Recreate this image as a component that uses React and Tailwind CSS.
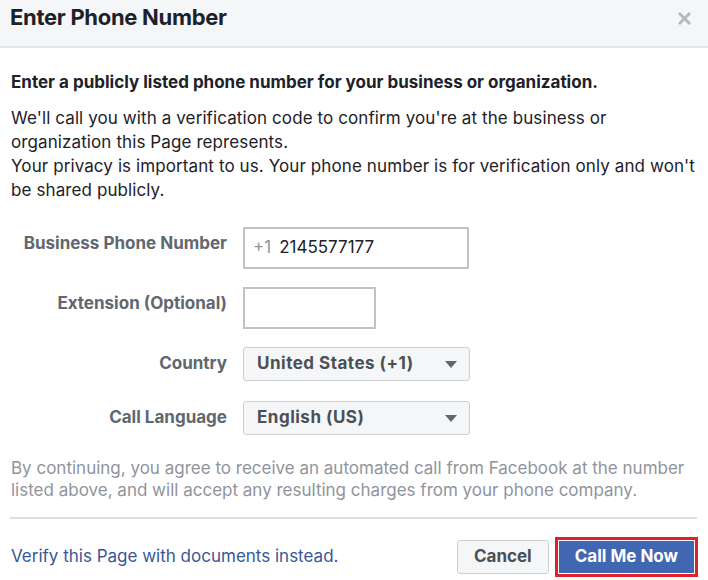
const FONT = { fontFamily: 'Inter, "Liberation Sans", Arial, sans-serif' }

function Caret() {
  return (
    <svg width="12" height="7" viewBox="0 0 12 7" className="shrink-0">
      <path d="M0 0 L12 0 L6 7 Z" fill="#606770" />
    </svg>
  )
}

function Row({ label, children, top = 'pt-[4px]' }) {
  return (
    <div className="flex items-start">
      <div className={`w-[232px] text-right pr-[16px] text-[17px] font-bold text-[#606770] ${top}`}>{label}</div>
      {children}
    </div>
  )
}

export default function App() {
  return (
    <div className="w-[708px] h-[580px] bg-white overflow-hidden text-[#1d2129]" style={FONT}>
      <header className="h-[48px] bg-[#f5f6f7] border-b-2 border-[#e5e5e5] flex items-center justify-between pl-[10px] pr-[16px]">
        <h1 className="text-[22px] font-bold tracking-[-0.3px] text-[#1d2129] -mt-[12px]">Enter Phone Number</h1>
        <svg width="15" height="15" viewBox="0 0 15 15" className="-mt-[10px]">
          <path d="M2 2 L13 13 M13 2 L2 13" stroke="#b4b7bc" strokeWidth="2.8" strokeLinecap="butt" />
        </svg>
      </header>

      <div className="px-[11px]">
        <p className="mt-[24px] text-[17px] font-bold leading-[20px]">
          Enter a publicly listed phone number for your business or organization.
        </p>
        <p className="mt-[14px] text-[17px] leading-[24px] tracking-[0.1px]">
          We'll call you with a verification code to confirm you're at the business or organization this Page represents.
          <br />
          Your privacy is important to us. Your phone number is for verification only and won't be shared publicly.
        </p>

        <div className="mt-[25px] flex flex-col gap-[18px]">
          <Row label="Business Phone Number">
            <div className="w-[226px] h-[42px] border-2 border-[#bec3c9] flex items-center pl-[8px] text-[17px]">
              <span className="text-[#90949c] mr-[8px]">+1</span>
              <span className="text-[#1d2129]">2145577177</span>
            </div>
          </Row>
          <Row label="Extension (Optional)">
            <div className="w-[133px] h-[42px] border-2 border-[#bec3c9]" />
          </Row>
          <div className="flex flex-col gap-[20px]">
            <Row label="Country">
              <div className="w-[227px] h-[34px] border border-[#ccd0d5] rounded-[3px] bg-[#f5f6f7] flex items-center justify-between pl-[13px] pr-[12px] text-[17px] font-bold tracking-[0.5px] text-[#4b4f56]">
                <span>United States (+1)</span>
                <Caret />
              </div>
            </Row>
            <Row label="Call Language">
              <div className="w-[227px] h-[34px] border border-[#ccd0d5] rounded-[3px] bg-[#f5f6f7] flex items-center justify-between pl-[13px] pr-[12px] text-[17px] font-bold tracking-[0.5px] text-[#4b4f56]">
                <span>English (US)</span>
                <Caret />
              </div>
            </Row>
          </div>
        </div>

        <p className="mt-[22px] text-[17px] leading-[22px] text-[#90949c]">
          By continuing, you agree to receive an automated call from Facebook at the number listed above, and will accept any resulting charges from your phone company.
        </p>

        <div className="mt-[16px] h-[2px] bg-[#dddfe2] w-[687px] -ml-[1px]" />

        <div className="mt-[18px] flex items-center justify-between">
          <a className="text-[17px] text-[#365899]">Verify this Page with documents instead.</a>
          <div className="flex items-center gap-[6px]">
            <button className="h-[34px] px-[16px] border border-[#ccd0d5] rounded-[3px] bg-[#f5f6f7] text-[17px] font-bold text-[#4b4f56]">
              Cancel
            </button>
            <div className="border-[3px] border-[#e0202b] p-[1px] -mr-[1px]">
              <button className="h-[32px] px-[16px] bg-[#4267b2] text-[17px] font-bold text-white">
                Call Me Now
              </button>
            </div>
          </div>
        </div>
      </div>
    </div>
  )
}
